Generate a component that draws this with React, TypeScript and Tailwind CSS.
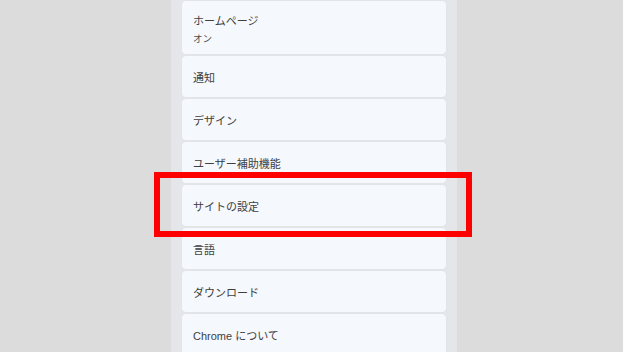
import React from "react";

const items: { title: string; sub?: string }[] = [
  { title: "ホームページ", sub: "オン" },
  { title: "通知" },
  { title: "デザイン" },
  { title: "ユーザー補助機能" },
  { title: "サイトの設定" },
  { title: "言語" },
  { title: "ダウンロード" },
  { title: "Chrome について" },
];

export default function App() {
  return (
    <div
      className="relative w-[623px] h-[352px] overflow-hidden bg-[#dcdcdc]"
      style={{ fontFamily: '"Liberation Sans", "Noto Sans CJK JP", sans-serif' }}
    >
      <div className="ml-[171px] w-[286px] h-full bg-[#e4e6ea] px-[11px] pt-[1px] flex flex-col gap-[2px]">
        {items.map((it) => (
          <div
            key={it.title}
            className={`shrink-0 rounded-[4px] bg-[#f5f8fc] shadow-[0_0_1px_rgba(0,0,0,0.08)] px-[11px] pt-[3px] flex flex-col justify-center ${
              it.sub ? "h-[53px]" : "h-[41px]"
            }`}
          >
            <div className="text-[11px] leading-[16px] text-[#404040]">{it.title}</div>
            {it.sub && (
              <div className="text-[9.5px] leading-[14px] mt-[3px] text-[#4a4a4a]">{it.sub}</div>
            )}
          </div>
        ))}
      </div>
      <div className="absolute left-[154px] top-[172px] w-[318px] h-[65px] border-[6px] border-[#ff0000]" />
    </div>
  );
}
